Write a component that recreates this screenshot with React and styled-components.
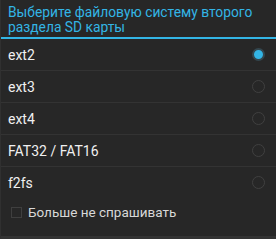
import React from 'react';
import styled, { createGlobalStyle } from 'styled-components';

const GlobalStyle = createGlobalStyle`
  html, body {
    margin: 0;
    padding: 0;
    background: #272727;
  }
  body {
    font-family: Roboto, "Liberation Sans", sans-serif;
  }
`;

const options = ['ext2', 'ext3', 'ext4', 'FAT32 / FAT16', 'f2fs'];

const App = () => (
  <>
    <GlobalStyle />
    <Dialog>
      <Title>Выберите файловую систему второго раздела SD карты</Title>
      <TitleLine />
      <List>
        {options.map((label, i) => (
          <Row key={label} $last={i === options.length - 1}>
            <Label>{label}</Label>
            <Radio $checked={i === 0} />
          </Row>
        ))}
      </List>
      <CheckRow>
        <Checkbox />
        <CheckLabel>Больше не спрашивать</CheckLabel>
      </CheckRow>
    </Dialog>
  </>
);

const Dialog = styled.div`
  width: 276px;
  height: 239px;
  box-sizing: border-box;
  background: #272727;
  border-left: 1px solid #303030;
  border-bottom: 3px solid #333333;
  display: flex;
  flex-direction: column;
`;

const Title = styled.div`
  color: #33b5e5;
  font-size: 13.8px;
  line-height: 15px;
  padding: 5px 8px 0 7px;
  height: 33px;
  box-sizing: border-box;
`;

const TitleLine = styled.div`
  height: 2px;
  margin-top: 4px;
  background: #33b5e5;
`;

const List = styled.div`
  display: flex;
  flex-direction: column;
`;

const Row = styled.div`
  height: 31px;
  display: flex;
  align-items: center;
  justify-content: space-between;
  padding: 0 11px 0 7px;
  border-bottom: 1px solid ${({ $last }) => ($last ? 'transparent' : '#333333')};
`;

const Label = styled.span`
  color: #f0f0f0;
  font-size: 14px;
`;

const Radio = styled.span`
  width: 13px;
  height: 13px;
  border-radius: 50%;
  box-sizing: border-box;
  border: ${({ $checked }) => ($checked ? '2px solid #34474f' : '1px solid #404040')};
  background: ${({ $checked }) => ($checked ? '#33b5e5' : 'transparent')};
`;

const CheckRow = styled.div`
  display: flex;
  align-items: center;
  gap: 6px;
  padding: 5px 0 0 10px;
`;

const Checkbox = styled.span`
  width: 11px;
  height: 11px;
  box-sizing: border-box;
  border: 1px solid #3f3f3f;
`;

const CheckLabel = styled.span`
  color: #d8d8d8;
  font-size: 13.5px;
`;

export default App;
